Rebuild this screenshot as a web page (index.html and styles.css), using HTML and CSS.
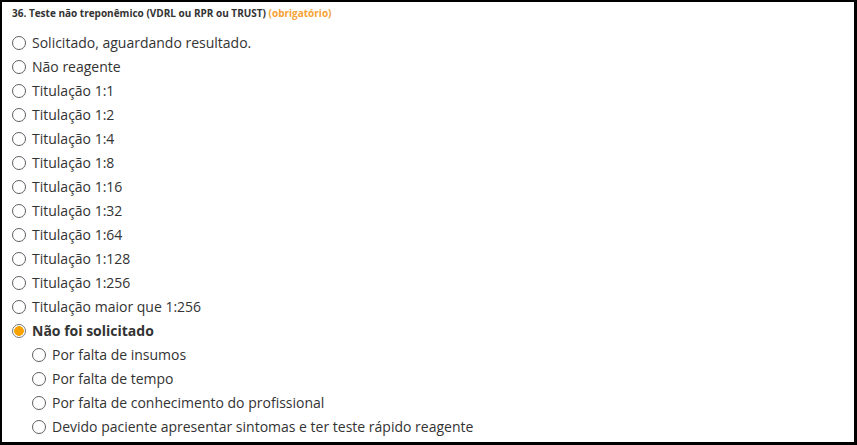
FILE: index.html
```html
<!DOCTYPE html>
<html lang="pt-BR">
<head>
<meta charset="utf-8">
<title>Teste não treponêmico</title>
<link rel="stylesheet" href="styles.css">
</head>
<body>
<div class="panel">
  <div class="question">36. Teste não treponêmico (VDRL ou RPR ou TRUST) <span class="req">(obrigatório)</span></div>
  <ul class="options">
    <li class="opt"><span class="radio"></span>Solicitado, aguardando resultado.</li>
    <li class="opt"><span class="radio"></span>Não reagente</li>
    <li class="opt"><span class="radio"></span>Titulação 1:1</li>
    <li class="opt"><span class="radio"></span>Titulação 1:2</li>
    <li class="opt"><span class="radio"></span>Titulação 1:4</li>
    <li class="opt"><span class="radio"></span>Titulação 1:8</li>
    <li class="opt"><span class="radio"></span>Titulação 1:16</li>
    <li class="opt"><span class="radio"></span>Titulação 1:32</li>
    <li class="opt"><span class="radio"></span>Titulação 1:64</li>
    <li class="opt"><span class="radio"></span>Titulação 1:128</li>
    <li class="opt"><span class="radio"></span>Titulação 1:256</li>
    <li class="opt"><span class="radio"></span>Titulação maior que 1:256</li>
    <li class="opt selected"><span class="radio checked"></span>Não foi solicitado</li>
    <li class="opt sub"><span class="radio"></span>Por falta de insumos</li>
    <li class="opt sub"><span class="radio"></span>Por falta de tempo</li>
    <li class="opt sub"><span class="radio"></span>Por falta de conhecimento do profissional</li>
    <li class="opt sub"><span class="radio"></span>Devido paciente apresentar sintomas e ter teste rápido reagente</li>
  </ul>
</div>
</body>
</html>
```
FILE: styles.css
```css
html, body {
  margin: 0;
  padding: 0;
  background: #ffffff;
}
body {
  font-family: "Open Sans", "Noto Sans", sans-serif;
  color: #333333;
}
.panel {
  box-sizing: border-box;
  width: 857px;
  height: 445px;
  border-style: solid;
  border-color: #000000;
  border-width: 2px 3px 3px 2px;
  padding: 2px 10px 0 10px;
}
.question {
  font-size: 10px;
  font-weight: bold;
  line-height: 18px;
  color: #333333;
}
.req {
  color: #f5a235;
}
.options {
  list-style: none;
  margin: 9px 0 0 0;
  padding: 0;
}
.opt {
  display: flex;
  align-items: center;
  height: 24px;
  font-size: 14px;
  line-height: 24px;
  color: #333333;
}
.opt.sub {
  padding-left: 20px;
}
.opt.selected {
  font-weight: bold;
}
.radio {
  box-sizing: border-box;
  flex: none;
  width: 14px;
  height: 14px;
  border: 1px solid #5f5f5f;
  border-radius: 50%;
  margin-right: 6px;
  background: #ffffff;
}
.radio.checked {
  border-color: #777777;
  background: radial-gradient(circle, #f8a200 0, #f8a200 4.5px, #ffffff 5.2px);
}
```
